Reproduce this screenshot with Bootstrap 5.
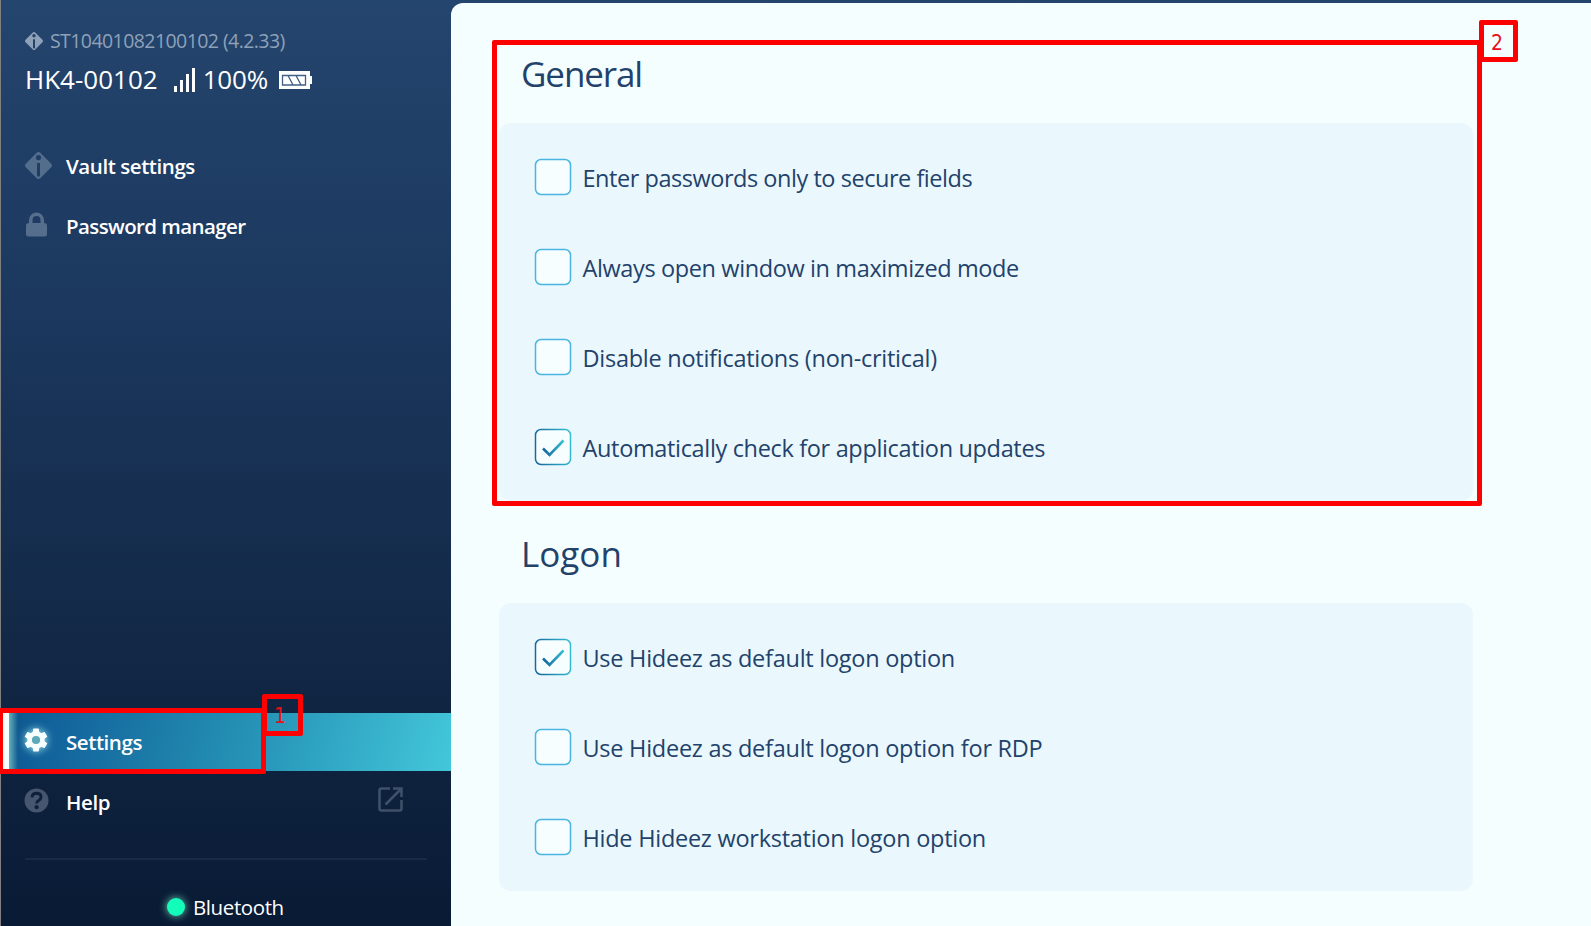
<!DOCTYPE html>
<html lang="en">
<head>
<meta charset="utf-8">
<title>Hideez settings</title>
<link rel="stylesheet" href="https://cdn.jsdelivr.net/npm/bootstrap@5.3.0/dist/css/bootstrap.min.css">
<script defer src="https://cdn.jsdelivr.net/npm/bootstrap@5.3.0/dist/js/bootstrap.bundle.min.js"></script>
<style>
body{font-family:"Open Sans","Noto Sans",sans-serif;background:linear-gradient(#24456e,#1b375d 35%,#122846 70%,#091a34);height:926px;color:#23426b}
svg{display:block;flex:none}
.side{width:451px;border-left:1px solid #808080;color:#fff}
.serial{height:34px;margin-top:24px;padding-left:24px;font-size:19.5px;letter-spacing:-.57px;color:#8ea1b8}
.device{height:43px;margin-bottom:1px;padding-left:24px;font-size:26px}
.top-menu{padding-top:34px}
.entry{height:60px;padding-left:24px;font-size:20.5px;font-weight:600;color:#fff;text-decoration:none;letter-spacing:-.6px;line-height:28px}
.entry .glyph{width:41px;flex:none}
.glyph svg{position:relative;top:-1px}
.glyph .up{top:-2px;left:-1px}
.fit-a{letter-spacing:-.43px}.fit-b{letter-spacing:-.6px}
.active-entry{height:58px;margin:1px 0;padding-left:16px;border-left:8px solid #f5feff;position:relative;background:linear-gradient(105deg,#0e568b 0,#11609a 8%,#2086ad 43%,#2b9cbd 63%,#43c7da 100%)}
.active-entry:before{content:"";position:absolute;left:0;top:0;bottom:0;width:9px;background:linear-gradient(90deg,#66b0bd,#3985a800)}
.active-entry svg{filter:drop-shadow(0 0 4px #a5eef0)}
.rule{height:2px;margin:26px 24px 0;background:#172b45}
.status{height:66px;padding:28px 0 0 166px;font-size:20.5px;letter-spacing:-.4px}
.dot{width:18px;height:18px;border-radius:50%;background:#13fdba;box-shadow:0 0 8px #6dd6b8}
.main{margin-top:3px;padding:0 118px 0 48px;background:#f5feff;border-radius:12px 0 0 0;height:923px}
.main h2{height:102px;margin:0;padding:0 0 0 22px;font-size:35px;line-height:106px;font-weight:400}
.main .first h2{height:120px;line-height:142px}
.box-list{background:#eaf8fd;border-radius:12px;padding:9px 0 9px 36px}
.opt{height:90px;font-size:23.5px}
.opt span{margin-left:10px;position:relative;top:2px;left:-.5px}
.t0{letter-spacing:-.38px}.t1{letter-spacing:-.46px}.t2{letter-spacing:-.34px}.t3{letter-spacing:-.26px}
.opt svg{position:relative;left:-1.5px;top:-.25px}
.mark-box{position:absolute;border:5px solid #f00;border-radius:2px;pointer-events:none}
.mark-num{font:21px/1 "DejaVu Sans Condensed","DejaVu Sans",sans-serif;font-stretch:condensed;color:#e8101c}
.m1{left:-2px;top:708px;width:268px;height:66px}
.n1{left:262px;top:694px;width:41px;height:42px;padding:7px 0 0 7px}
.m2{left:492px;top:40px;width:990px;height:466px}
.n2{left:1479px;top:20px;width:39px;height:42px;padding:8px 0 0 7px}
</style>
</head>
<body class="d-flex overflow-hidden position-relative">
<svg width="0" height="0" class="position-absolute">
  <defs>
    <linearGradient id="g" x1="0" x2="1" y1=".1" y2="0"><stop stop-color="#176a9d"/><stop offset="1" stop-color="#36bfd6"/></linearGradient>
    <symbol id="off" viewBox="0 0 38 38"><rect x="1.5" y="1.5" width="35" height="35" rx="5.5" fill="#f7feff" stroke="#4ab5e2" stroke-width="1.5"/></symbol>
    <symbol id="on" viewBox="0 0 38 38"><rect x="1.5" y="1.5" width="35" height="35" rx="5.5" fill="#f7feff" stroke="url(#g)" stroke-width="1.5"/><path d="M9 20.5l6.500 6.300L29.500 12.500" fill="none" stroke="url(#g)" stroke-width="2.6"/></symbol>
    <symbol id="vault" viewBox="0 0 27 27"><path fill="currentColor" fill-rule="evenodd" d="M11.700.8q1.800-1.600 3.600 0L26.200 11.700q1.600 1.800 0 3.600L15.300 26.200q-1.800 1.600-3.600 0L.8 15.300q-1.600-1.800 0-3.600zM13.500 3a2.600 2.600 0 1 0 0 5.200 2.600 2.600 0 1 0 0-5.200zM12 11v12.500q1.500 2.500 3 0V11z"/></symbol>
  </defs>
</svg>

<aside class="side flex-shrink-0 d-flex flex-column">
  <div class="serial d-flex align-items-center"><svg width="18" height="18" class="me-2"><use href="#vault"/></svg><span style="margin-left:-1px">ST10401082100102 (4.2.33)</span></div>
  <div class="device d-flex align-items-center">
    <span>HK4-00102</span>
    <svg width="22" height="24" class="ms-3" fill="#fff"><path d="M0 18h3v6H0zM6 12h3v12H6zM12 6h3v18h-3zM18 0h3v24h-3z"/></svg>
    <span style="margin-left:7px;letter-spacing:-.2px">100%</span>
    <svg width="34" height="18" style="margin-left:11px"><path d="M0 0h31v5h2v8h-2v5H0z" fill="#fff"/><path d="M3.500 4.500h23v9.500h-23zM9 4.500l5 9.500M17 4.500l5 9.500" fill="none" stroke="#415f84" stroke-width="1.300"/></svg>
  </div>
  <nav class="top-menu">
    <a href="#" class="entry d-flex align-items-center"><span class="glyph"><svg width="27" height="27" color="#536e8d"><use href="#vault"/></svg></span><span class="fit-a">Vault settings</span></a>
    <a href="#" class="entry d-flex align-items-center"><span class="glyph"><svg width="23" height="25" class="up" style="left:0"><path fill="#566e8d" fill-rule="evenodd" d="M4 11V8a7.500 7.500 0 0 1 15 0v3q3 0 3 2.500V22q0 2.500-2.500 2.500h-16Q1 24.500 1 22v-8.500Q1 11 4 11zm3.500 0h8V8a4 4 0 0 0-8 0z"/></svg></span><span class="fit-b">Password manager</span></a>
  </nav>
  <nav class="mt-auto">
    <a href="#" class="entry active-entry d-flex align-items-center"><span class="glyph"><svg class="up" width="24" height="24" viewBox="2.300 2 19.400 20"><path fill="#f7feff" d="M19.140 12.940c.04-.3.060-.61.060-.94 0-.32-.02-.64-.07-.94l2.030-1.580a.49.49 0 0 0 .12-.61l-1.920-3.320a.49.49 0 0 0-.59-.22l-2.390.96c-.5-.38-1.030-.7-1.620-.94L14.400 2.810a.48.48 0 0 0-.48-.41h-3.840c-.24 0-.43.17-.47.41L9.250 5.350c-.59.24-1.130.57-1.620.94l-2.390-.96a.48.48 0 0 0-.59.22L2.740 8.870a.47.47 0 0 0 .12.610l2.030 1.580c-.05.3-.09.63-.09.94s.02.64.07.94l-2.030 1.580a.49.49 0 0 0-.12.610l1.920 3.320c.12.22.37.29.59.22l2.390-.96c.5.38 1.030.7 1.620.94l.36 2.540c.05.24.24.41.48.41h3.840c.24 0 .44-.17.47-.41l.36-2.540c.59-.24 1.130-.56 1.620-.94l2.390.96c.22.080.47 0 .59-.22l1.920-3.320a.47.47 0 0 0-.12-.61z"/><circle cx="12" cy="12" r="3.400" fill="#5ba9b9"/></svg></span><span class="fit-a">Settings</span></a>
    <a href="#" class="entry d-flex align-items-center"><span class="glyph"><svg class="up" width="25" height="25" viewBox="0 0 25 25"><circle cx="12.500" cy="12.500" r="12" fill="#45566e"/><path d="M8 9.300q.3-4 4.600-4 4.400.1 4.400 3.700 0 2.100-2.300 3.400-2 1.100-2 3.100" fill="none" stroke="#0d213d" stroke-width="2.900"/><circle cx="12.600" cy="19.200" r="2.100" fill="#0d213d"/></svg></span><span style="letter-spacing:-.4px">Help</span>
      <svg class="ms-auto" width="25" height="25" style="margin-right:48px;margin-top:-5px" fill="none" stroke="#3f5068" stroke-width="2.600"><path d="M12 1.500H3.500q-2 0-2 2v18q0 2 2 2h18q2 0 2-2V13M15 1.500h8.500V10M23 2L7.500 17.500"/></svg></a>
    <div class="rule"></div>
    <div class="status d-flex align-items-center"><span class="dot"></span><span class="ms-2">Bluetooth</span></div>
  </nav>
</aside>

<main class="main flex-grow-1">
  <section class="first">
    <h2 style="letter-spacing:-1.1px">General</h2>
    <div class="box-list">
      <label class="opt d-flex align-items-center"><svg width="38" height="38"><use href="#off"/></svg><span class="t1">Enter passwords only to secure fields</span></label>
      <label class="opt d-flex align-items-center"><svg width="38" height="38"><use href="#off"/></svg><span class="t0">Always open window in maximized mode</span></label>
      <label class="opt d-flex align-items-center"><svg width="38" height="38"><use href="#off"/></svg><span class="t3">Disable notifications (non-critical)</span></label>
      <label class="opt d-flex align-items-center"><svg width="38" height="38"><use href="#on"/></svg><span class="t2">Automatically check for application updates</span></label>
    </div>
  </section>
  <section>
    <h2>Logon</h2>
    <div class="box-list">
      <label class="opt d-flex align-items-center"><svg width="38" height="38"><use href="#on"/></svg><span class="t3">Use Hideez as default logon option</span></label>
      <label class="opt d-flex align-items-center"><svg width="38" height="38"><use href="#off"/></svg><span class="t3">Use Hideez as default logon option for RDP</span></label>
      <label class="opt d-flex align-items-center"><svg width="38" height="38"><use href="#off"/></svg><span class="t3">Hide Hideez workstation logon option</span></label>
    </div>
  </section>
</main>

<div class="mark-box m1"></div><div class="mark-box mark-num n1">1</div>
<div class="mark-box m2"></div><div class="mark-box mark-num n2">2</div>
</body>
</html>
